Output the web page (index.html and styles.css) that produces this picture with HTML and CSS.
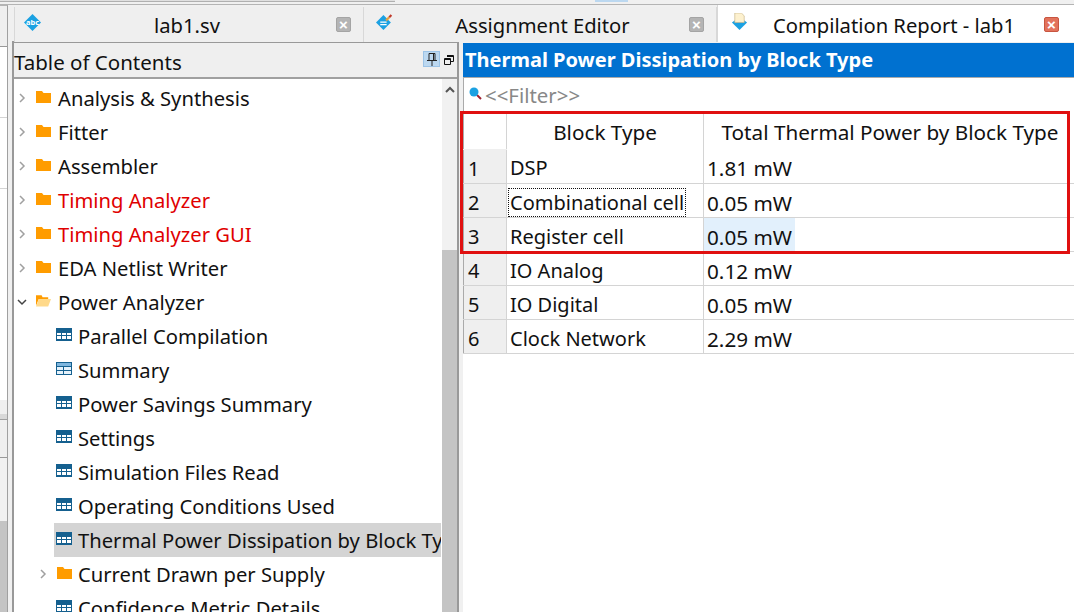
FILE: index.html
```html
<!DOCTYPE html>
<html>
<head>
<meta charset="utf-8" />
<title>Compilation Report - lab1</title>
<link rel="stylesheet" href="styles.css">
</head>
<body>
<svg class="defs" width="0" height="0">
	<symbol id="folder" viewBox="0 0 15 13"><path d="M0 1h6l1.500 2H15v10H0z" fill="#ff9c00"/></symbol>
	<symbol id="grid" viewBox="0 0 16 13"><path d="M0 0h16v13H0z" fill="#15608f"/><path d="M1 5h4v2H1zM6 5h4v2H6zM11 5h4v2h-4zM1 8h4v3H1zM6 8h4v3H6zM11 8h4v3h-4z" fill="#fff"/></symbol>
	<symbol id="gridlight" viewBox="0 0 16 13"><path d="M0 0h16v13H0z" fill="#15608f"/><path d="M1 1h14v3H1z" fill="#7fb6de"/><path d="M1 5h6v3H1zM8 5h7v3H8zM1 9h6v3H1zM8 9h7v3H8z" fill="#e6f2fb"/></symbol>
	<symbol id="chev" viewBox="0 0 8 10"><path d="M2 1l4 4-4 4" fill="none" stroke="#a0a0a0" stroke-width="1.500"/></symbol>
</svg>
<div id="topedge">
	<div class="topbar"></div>
	<div class="topmark"></div>
</div>
<div id="page">
	<div id="leftstrip">
		<div class="lhead"></div>
		<div class="lwhite">
			<div class="lrow"></div>
			<div class="lrow"></div>
		</div>
		<div class="lfoot"></div>
		<div class="lgap"></div>
		<div class="lhead2"></div>
		<div class="lscroll"><div class="lthumb"></div></div>
	</div>
	<div id="work">
		<div id="tabs">
			<div class="tab tab1">
				<svg class="tabicon" viewBox="0 0 16 16"><path d="M8 0l8 8-8 8-8-8z" fill="#1ba1e2"/><text x="8" y="10.500" class="abc">abc</text></svg>
				<span class="tablabel">lab1.sv</span>
				<span class="closebtn">×</span>
			</div>
			<div class="tab tab2">
				<svg class="tabicon" viewBox="0 0 16 16"><path d="M7 1l7 7-7 7-7-7z" fill="#1ba1e2"/><path d="M4 7h6v1.200H4zM4 9.300h6v1.200H4z" fill="#fff"/><path d="M9.500 6l3-3" stroke="#e8a13b" stroke-width="2"/><path d="M12.500 3l2-2" stroke="#c0392b" stroke-width="2"/></svg>
				<span class="tablabel">Assignment Editor</span>
				<span class="closebtn">×</span>
			</div>
			<div class="tab tab3">
				<svg class="tabicon" viewBox="0 0 16 18"><path d="M8 4l8 6-8 8-8-8z" fill="#1ba1e2"/><path d="M3 0h7l3 3v7H3z" fill="#fdf1cf" stroke="#c9b68a" stroke-width=".7"/></svg>
				<span class="tablabel">Compilation Report - lab1</span>
				<span class="closebtn red">×</span>
			</div>
		</div>
		<div id="panes">
			<div id="toc">
				<div class="tochead">
					<span>Table of Contents</span>
					<span class="pinbtn"><svg width="10" height="14" viewBox="0 0 10 14"><path d="M2 1.500h6v7H2zM0 8.500h10M5 8.500V14M6.500 2v6" fill="none" stroke="#222"/></svg></span>
					<svg class="floatbtn" width="10" height="10" viewBox="0 0 10 10"><path d="M3 .5h6.500v6H7M.5 3.500h6v6h-6z" fill="none" stroke="#111"/><path d="M3 1.500h6.500M.5 4.500h6" stroke="#111"/></svg>
				</div>
				<div class="tocbody">
					<div class="tree">
						<div class="row"><svg class="chev"><use href="#chev"/></svg><svg class="fold"><use href="#folder"/></svg>Analysis &amp; Synthesis</div>
						<div class="row"><svg class="chev"><use href="#chev"/></svg><svg class="fold"><use href="#folder"/></svg>Fitter</div>
						<div class="row"><svg class="chev"><use href="#chev"/></svg><svg class="fold"><use href="#folder"/></svg>Assembler</div>
						<div class="row warn"><svg class="chev"><use href="#chev"/></svg><svg class="fold"><use href="#folder"/></svg>Timing Analyzer</div>
						<div class="row warn"><svg class="chev"><use href="#chev"/></svg><svg class="fold"><use href="#folder"/></svg>Timing Analyzer GUI</div>
						<div class="row"><svg class="chev"><use href="#chev"/></svg><svg class="fold"><use href="#folder"/></svg>EDA Netlist Writer</div>
						<div class="row"><svg class="chev" viewBox="0 0 10 8"><path d="M1 2l4 4 4-4" fill="none" stroke="#444" stroke-width="1.500"/></svg><svg class="fold" viewBox="0 0 16 13"><path d="M0 1h6l1 2h6v2H3L0 12z" fill="#ff9c00"/><path d="M3 5h13l-3 8H0z" fill="#ffd98a"/></svg>Power Analyzer</div>
						<div class="row sub"><svg class="grid"><use href="#grid"/></svg>Parallel Compilation</div>
						<div class="row sub"><svg class="grid"><use href="#gridlight"/></svg>Summary</div>
						<div class="row sub"><svg class="grid"><use href="#grid"/></svg>Power Savings Summary</div>
						<div class="row sub"><svg class="grid"><use href="#grid"/></svg>Settings</div>
						<div class="row sub"><svg class="grid"><use href="#grid"/></svg>Simulation Files Read</div>
						<div class="row sub"><svg class="grid"><use href="#grid"/></svg>Operating Conditions Used</div>
						<div class="row sub sel"><svg class="grid"><use href="#grid"/></svg>Thermal Power Dissipation by Block Type</div>
						<div class="row subfold"><svg class="chev"><use href="#chev"/></svg><svg class="fold"><use href="#folder"/></svg>Current Drawn per Supply</div>
						<div class="row sub"><svg class="grid"><use href="#grid"/></svg>Confidence Metric Details</div>
					</div>
					<div class="vscroll">
						<div class="arrowup"><svg width="12" height="8" viewBox="0 0 12 8"><path d="M2 6l4-4 4 4" fill="none" stroke="#555" stroke-width="2"/></svg></div>
						<div class="thumb"></div>
					</div>
				</div>
			</div>
			<div id="report">
				<div class="rephead">Thermal Power Dissipation by Block Type</div>
				<div class="filter"><svg width="15" height="15" viewBox="0 0 15 15"><path d="M9 9l4 4" stroke="#a02030" stroke-width="2"/><circle cx="6" cy="6" r="4.500" fill="#1ba1e2"/></svg><span>&lt;&lt;Filter&gt;&gt;</span></div>
				<table class="grid-table">
					<tr class="hdr"><th class="num"></th><th class="c1">Block Type</th><th>Total Thermal Power by Block Type</th></tr>
					<tr><td class="num">1</td><td>DSP</td><td class="val">1.81 mW</td></tr>
					<tr><td class="num">2</td><td><span class="focus">Combinational cell</span></td><td class="val">0.05 mW</td></tr>
					<tr><td class="num">3</td><td>Register cell</td><td class="val"><span class="hilite">0.05 mW</span></td></tr>
					<tr><td class="num">4</td><td>IO Analog</td><td class="val">0.12 mW</td></tr>
					<tr><td class="num">5</td><td>IO Digital</td><td class="val">0.05 mW</td></tr>
					<tr><td class="num">6</td><td>Clock Network</td><td class="val">2.29 mW</td></tr>
				</table>
				<div class="redbox"></div>
			</div>
		</div>
	</div>
</div>
</body>
</html>
```
FILE: styles.css
```css
html,body{margin:0; height:100%; overflow:hidden;}
body{width:1074px; height:612px; background:#f0f0f0; font-family:"Noto Sans","Open Sans",sans-serif; font-size:20px; color:#111; display:flex; flex-direction:column;}
.defs{position:absolute;}

#topedge{height:4px; border-bottom:1px solid #b4b4b4; flex:none; display:flex; align-items:flex-start;}
.topbar{width:395px; height:1px; background:#e0e0e0; border-bottom:1px solid #b0b0b0;}
.topmark{width:33px; height:2px; margin-left:200px; background:#bcd8f0;}

#page{flex:1; display:flex; min-height:0;}
#leftstrip{width:7px; border-right:1px solid #a0a0a0; flex:none; display:flex; flex-direction:column; border-top:1px solid #b4b4b4;}
.lhead{height:40px; background:#efefef; border-bottom:1px solid #999; flex:none;}
.lwhite{height:353px; background:#fff; flex:none;}
.lrow{height:70px; border-bottom:1px solid #d4d4d4;}
.lfoot{height:14px; background:#efefef; flex:none;}
.lgap{height:5px; background:#d8d8d8; border-bottom:1px solid #a0a0a0; flex:none;}
.lhead2{height:37px; background:#efefef; border-bottom:1px solid #999; flex:none;}
.lscroll{flex:1; background:#f1f1f1; padding-top:63px;}
.lthumb{height:100%; background:#c4c4c4;}
#work{flex:1; display:flex; flex-direction:column; min-width:0; margin-left:4px;}

#tabs{height:37px; display:flex; flex:none; margin-left:2px; margin-top:0;}
.tab{display:flex; align-items:center; position:relative; border-right:1px solid #d8d8d8; background:#efefef; box-sizing:border-box; padding-left:9px; margin-top:2px;}
.tab1{width:350px; border-left:1px solid #d8d8d8;}
.tab2{width:353px; padding-left:12px;}
.tab3{flex:1; background:#fff; margin-top:0; padding-left:13px; border-right:none; border-left:1px solid #d8d8d8;}
.tabicon{width:17px; height:17px; flex:none; margin-top:-5px;}
.abc{font-family:"Noto Sans",sans-serif; font-size:7px; font-weight:bold; fill:#fff; text-anchor:middle;}
.tablabel{position:absolute; left:0; right:0; text-align:center; top:4px; line-height:28px; font-size:20.2px;}
.tab1 .tablabel{left:-4px;}
.tab2 .tablabel{left:5px;}
.tab3 .tablabel{left:-4px; top:6px;}
.closebtn{position:absolute; right:12px; top:10px; width:13px; height:13px; border-radius:2px; background:#b4b4b4; border:1px solid #a4a4a4; color:#fff; font:bold 15px/13px "Liberation Sans",sans-serif; text-align:center;}
.tab3 .closebtn{top:12px; right:15px;}
.closebtn.red{background:#e2725b; border-color:#c85540;}

#panes{flex:1; display:flex; min-height:0; margin-left:0;}

#toc{width:447px; flex:none; box-sizing:border-box; border:1px solid #999; border-width:2px 2px 0 2px; display:flex; flex-direction:column; margin-right:4px; margin-top:-1px; background:#fff;}
.tochead{height:36px; box-sizing:border-box; padding-top:4px; background:#efefef; border-bottom:2px solid #a0a0a0; display:flex; align-items:center; flex:none; line-height:28px; font-size:20.5px;}
.tochead span:first-child{flex:1;}
.pinbtn{width:15px; height:14px; background:#bcd8f0; border:1px solid #9cc3e6; display:flex; justify-content:center; margin-right:4px; margin-top:-6px;}
.floatbtn{margin-right:3px; margin-top:-4px;}

.tocbody{flex:1; display:flex; min-height:0;}
.tree{flex:1; min-width:0; overflow:hidden; padding-top:2px; font-size:20.2px;}
.row{height:34px; line-height:34px; white-space:nowrap; display:flex; align-items:center; padding-left:3px; overflow:hidden;}
.row.warn{color:#e00000;}
.chev{width:10px; height:10px; margin-right:9px; flex:none;}
.fold{width:15px; height:13px; margin-right:7px; flex:none; margin-top:-4px;}
.sub{margin-left:40px; padding-left:2px; height:34px;}
.subfold{padding-left:24px;}
.subfold .fold{margin-right:6px;}
.grid{width:16px; height:13px; margin-right:6px; flex:none; margin-top:-4px;}
.sel{background:#d4d4d4; margin-right:1px;}

.vscroll{width:15px; background:#f1f1f1; flex:none; display:flex; flex-direction:column;}
.arrowup{height:28px; display:flex; justify-content:center; align-items:center; padding-bottom:6px; box-sizing:border-box; flex:none;}
.thumb{height:100%; margin-top:143px; background:#c4c4c4;}

#report{flex:1; min-width:0; position:relative; background:#fff; margin-top:1px;}
.rephead{height:34px; line-height:34px; background:#0071d0; color:#fff; font-weight:bold; font-size:20px; padding-left:2px;}
.filter{height:34px; padding-top:1px; border-left:1px solid #aaa; border-top:1px solid #aaa; box-sizing:border-box; display:flex; align-items:center; padding-left:4px; color:#888; font-size:20.4px;}
.filter svg{margin-top:-3px; margin-right:2px;}

.grid-table{border-collapse:collapse; width:614px; table-layout:fixed; border-left:1px solid #aaa;}
.grid-table th,.grid-table td{height:34px; padding:5px 0 0 3px; border-right:1px solid #d4d4d4; border-bottom:1px solid #d4d4d4; font-weight:normal; text-align:left; white-space:nowrap; box-sizing:border-box; line-height:26px;}
.grid-table th{height:38px; padding:4px 0 0 0; text-align:center; border-bottom:none; font-size:20.7px; line-height:27px;}
.grid-table th.num{background:#fff; border-bottom:1px solid #efefef;}
.grid-table td.num{background:#efefef; padding-left:4px;}
.grid-table td.val{font-size:20.7px;}
.grid-table .num{width:43px;}
.grid-table .c1{width:197px;}
.focus{display:inline-block; line-height:25px; outline:1px dotted #111; outline-offset:1px;}
.hilite{display:block; box-sizing:border-box; width:91px; margin:-5px 0 0 -3px; padding:5px 0 0 3px; background:#e2f0fc; line-height:28px;}
.redbox{position:absolute; left:-3px; top:68px; width:610px; height:143px; box-sizing:border-box; border:3px solid #e01010; pointer-events:none;}
```
